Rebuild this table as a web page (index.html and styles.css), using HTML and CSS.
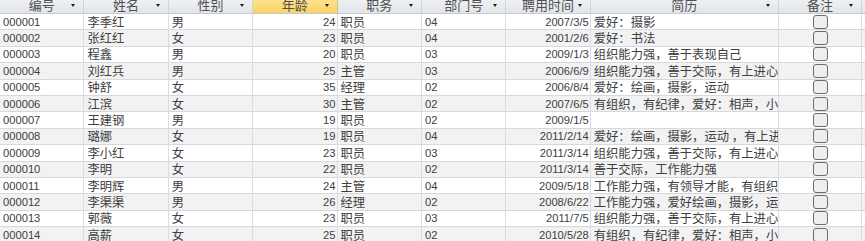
FILE: index.html
```html
<!DOCTYPE html>
<html lang="zh-CN">
<head>
<meta charset="utf-8">
<title>员工表</title>
<link rel="stylesheet" href="styles.css">
</head>
<body>
<div class="sheet">
  <div class="h"><span></span><span class="t">编号</span><i class="dd"></i></div>
  <div class="h"><span></span><span class="t">姓名</span><i class="dd"></i></div>
  <div class="h"><span></span><span class="t">性别</span><i class="dd"></i></div>
  <div class="h sel"><span></span><span class="t">年龄</span><i class="dd"></i></div>
  <div class="h"><span></span><span class="t">职务</span><i class="dd"></i></div>
  <div class="h"><span></span><span class="t">部门号</span><i class="dd"></i></div>
  <div class="h"><span></span><span class="t">聘用时间</span><i class="dd"></i></div>
  <div class="h"><span></span><span class="t">简历</span><i class="dd"></i></div>
  <div class="h"><span></span><span class="t">备注</span><i class="dd"></i></div>
  <div class="h fill"></div>

  <div class="c n">000001</div><div class="c">李季红</div><div class="c">男</div><div class="c n r">24</div><div class="c">职员</div><div class="c n">04</div><div class="c n r">2007/3/5</div><div class="c">爱好：摄影</div><div class="c cb"><span class="box"></span></div><div class="c fill"></div>
  <div class="c n">000002</div><div class="c">张红红</div><div class="c">女</div><div class="c n r">23</div><div class="c">职员</div><div class="c n">04</div><div class="c n r">2001/2/6</div><div class="c">爱好：书法</div><div class="c cb"><span class="box"></span></div><div class="c fill"></div>
  <div class="c n">000003</div><div class="c">程鑫</div><div class="c">男</div><div class="c n r">20</div><div class="c">职员</div><div class="c n">03</div><div class="c n r">2009/1/3</div><div class="c">组织能力强，善于表现自己</div><div class="c cb"><span class="box"></span></div><div class="c fill"></div>
  <div class="c n">000004</div><div class="c">刘红兵</div><div class="c">男</div><div class="c n r">25</div><div class="c">主管</div><div class="c n">03</div><div class="c n r">2006/6/9</div><div class="c">组织能力强，善于交际，有上进心</div><div class="c cb"><span class="box"></span></div><div class="c fill"></div>
  <div class="c n">000005</div><div class="c">钟舒</div><div class="c">女</div><div class="c n r">35</div><div class="c">经理</div><div class="c n">02</div><div class="c n r">2006/8/4</div><div class="c">爱好：绘画，摄影，运动</div><div class="c cb"><span class="box"></span></div><div class="c fill"></div>
  <div class="c n">000006</div><div class="c">江滨</div><div class="c">女</div><div class="c n r">30</div><div class="c">主管</div><div class="c n">02</div><div class="c n r">2007/6/5</div><div class="c">有组织，有纪律，爱好：相声，小品</div><div class="c cb"><span class="box"></span></div><div class="c fill"></div>
  <div class="c n">000007</div><div class="c">王建钢</div><div class="c">男</div><div class="c n r">19</div><div class="c">职员</div><div class="c n">02</div><div class="c n r">2009/1/5</div><div class="c"></div><div class="c cb"><span class="box"></span></div><div class="c fill"></div>
  <div class="c n">000008</div><div class="c">璐娜</div><div class="c">女</div><div class="c n r">19</div><div class="c">职员</div><div class="c n">04</div><div class="c n r">2011/2/14</div><div class="c">爱好：绘画，摄影，运动 ，有上进心</div><div class="c cb"><span class="box"></span></div><div class="c fill"></div>
  <div class="c n">000009</div><div class="c">李小红</div><div class="c">女</div><div class="c n r">23</div><div class="c">职员</div><div class="c n">03</div><div class="c n r">2011/3/14</div><div class="c">组织能力强，善于交际，有上进心</div><div class="c cb"><span class="box"></span></div><div class="c fill"></div>
  <div class="c n">000010</div><div class="c">李明</div><div class="c">女</div><div class="c n r">22</div><div class="c">职员</div><div class="c n">02</div><div class="c n r">2011/3/14</div><div class="c">善于交际，工作能力强</div><div class="c cb"><span class="box"></span></div><div class="c fill"></div>
  <div class="c n">000011</div><div class="c">李明辉</div><div class="c">男</div><div class="c n r">24</div><div class="c">主管</div><div class="c n">04</div><div class="c n r">2009/5/18</div><div class="c">工作能力强，有领导才能，有组织能力</div><div class="c cb"><span class="box"></span></div><div class="c fill"></div>
  <div class="c n">000012</div><div class="c">李渠渠</div><div class="c">男</div><div class="c n r">26</div><div class="c">经理</div><div class="c n">02</div><div class="c n r">2008/6/22</div><div class="c">工作能力强，爱好绘画，摄影，运动</div><div class="c cb"><span class="box"></span></div><div class="c fill"></div>
  <div class="c n">000013</div><div class="c">郭薇</div><div class="c">女</div><div class="c n r">23</div><div class="c">职员</div><div class="c n">03</div><div class="c n r">2011/7/5</div><div class="c">组织能力强，善于交际，有上进心</div><div class="c cb"><span class="box"></span></div><div class="c fill"></div>
  <div class="c n">000014</div><div class="c">高薪</div><div class="c">女</div><div class="c n r">25</div><div class="c">职员</div><div class="c n">02</div><div class="c n r">2010/5/28</div><div class="c">有组织，有纪律，爱好：相声，小品</div><div class="c cb"><span class="box"></span></div><div class="c fill"></div>
</div>
</body>
</html>
```

FILE: styles.css
```css
html, body {
  margin: 0;
  padding: 0;
  background: #ffffff;
  overflow: hidden;
}

body {
  width: 865px;
  height: 241px;
  font-family: "Noto Sans CJK SC", sans-serif;
  color: #404040;
}

.sheet {
  display: grid;
  grid-template-columns: repeat(7, 84.4px) 188.2px 83px 1fr;
  grid-template-rows: 14px repeat(14, 16.4px);
  width: 865px;
}

/* header cells */
.h {
  box-sizing: border-box;
  display: grid;
  grid-template-columns: 12px 1fr 12px;
  background: linear-gradient(#eef0f3, #e2e5e9);
  border-right: 1px solid #cfd5dd;
  border-bottom: 1px solid #c3cad3;
  font-size: 13px;
  color: #505050;
  overflow: hidden;
}

.h .t {
  line-height: 10px;
  text-align: center;
  white-space: nowrap;
}

.h .dd {
  justify-self: start;
  align-self: start;
  margin-top: 4px;
  width: 0;
  height: 0;
  border-left: 2.5px solid transparent;
  border-right: 2.5px solid transparent;
  border-top: 3px solid #1e1e1e;
}

.h.sel {
  background: linear-gradient(#fde28f, #fbd263);
  border-right-color: #d9c27a;
}

.h.fill {
  display: block;
  border-right: none;
}

/* data cells */
.c {
  box-sizing: border-box;
  display: flex;
  align-items: center;
  padding: 0 2px 0 3px;
  border-right: 1px solid #d7dde6;
  border-bottom: 1px solid #d2d9e2;
  font-size: 12.3px;
  line-height: 14px;
  white-space: nowrap;
  overflow: hidden;
  background: #ffffff;
}

.c.n {
  font-family: "Liberation Sans", "Noto Sans CJK SC", sans-serif;
  font-size: 11.2px;
}

.c.r {
  justify-content: flex-end;
  padding-right: 1px;
}

.c.cb {
  justify-content: center;
  padding: 0 0 0 2px;
}

.c.fill {
  border-right: none;
  padding: 0;
}

/* alternating row shading (10 cells per row) */
.c:nth-child(20n+21),
.c:nth-child(20n+22),
.c:nth-child(20n+23),
.c:nth-child(20n+24),
.c:nth-child(20n+25),
.c:nth-child(20n+26),
.c:nth-child(20n+27),
.c:nth-child(20n+28),
.c:nth-child(20n+29),
.c:nth-child(20n+30) {
  background: #f2f2f2;
}

.box {
  box-sizing: border-box;
  width: 15px;
  height: 14px;
  border: 1.5px solid #6c6c6c;
  border-radius: 3px;
  background: #eeeeee;
}
```
